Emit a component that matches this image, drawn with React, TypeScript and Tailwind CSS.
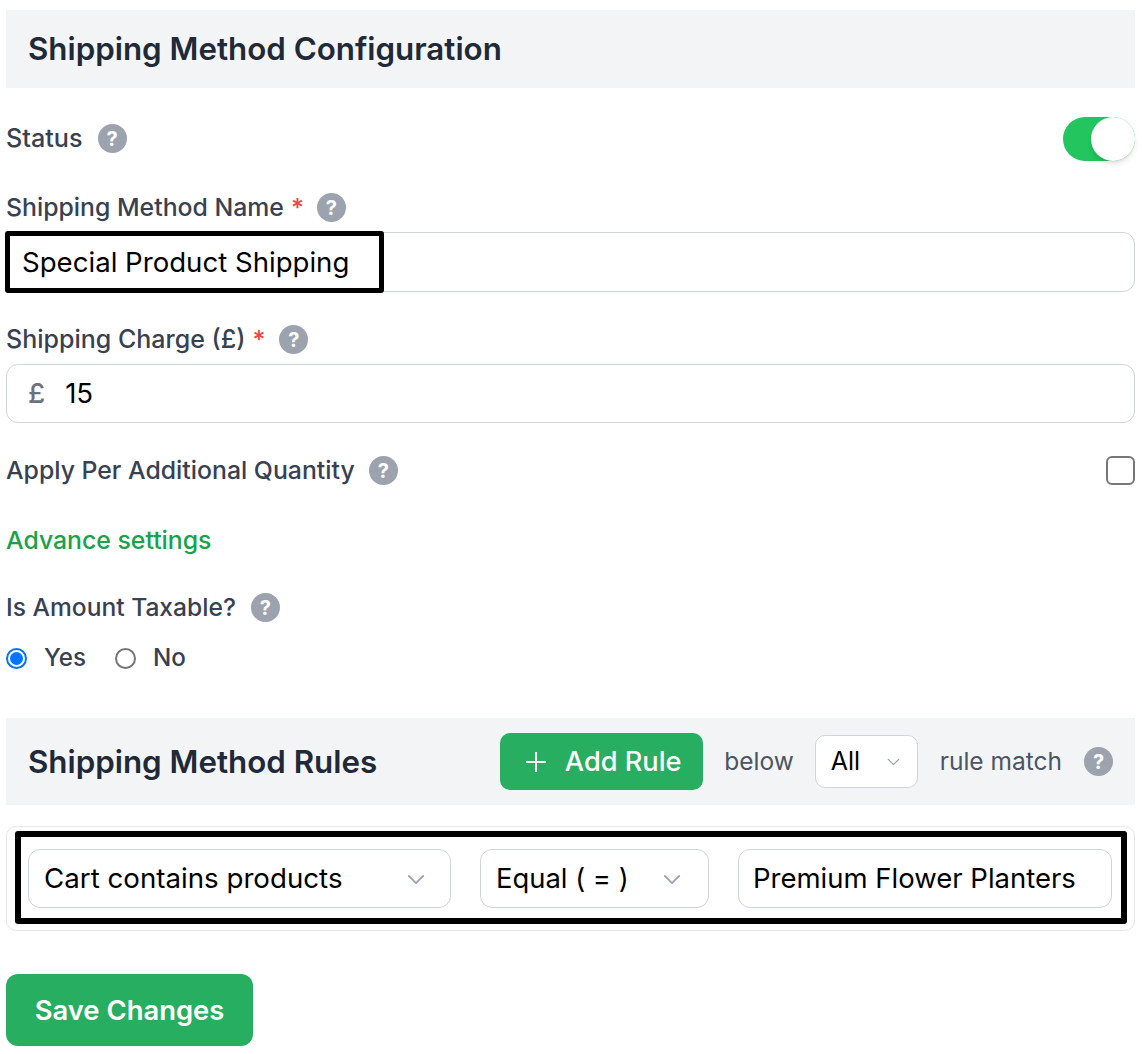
import React from "react";

function Help({ className = "" }: { className?: string }) {
  return (
    <span className={"flex h-[29px] w-[29px] shrink-0 items-center justify-center rounded-full bg-[#9ca3af] text-[20px] font-bold leading-none text-white " + className}>?</span>
  );
}

function Chevron({ className = "" }: { className?: string }) {
  return (
    <svg className={className} viewBox="0 0 20 12" fill="none" stroke="#9ca3af" strokeWidth="2" strokeLinecap="round" strokeLinejoin="round">
      <path d="M2 2l8 8 8-8" />
    </svg>
  );
}

export default function App() {
  return (
    <div className="bg-white px-[6px] pr-[7px] pt-[10px] font-['Inter','Liberation_Sans',sans-serif] text-[#374151] h-[1054px] overflow-hidden">
      <div className="flex h-[78px] items-center bg-[#f3f4f6] px-[22px]">
        <h2 className="text-[31.3px] font-semibold text-[#1f2937]">Shipping Method Configuration</h2>
      </div>

      <div className="mt-[29px] flex h-[44px] items-center justify-between">
        <div className="flex items-center gap-[15px]">
          <span className="text-[25.2px] font-medium">Status</span>
          <Help />
        </div>
        <div className="relative h-[44px] w-[72px] rounded-full bg-[#22c55e]">
          <span className="absolute right-0 top-0 h-[44px] w-[44px] rounded-full bg-white shadow-md" />
        </div>
      </div>

      <div className="mt-[32px] flex h-[29px] items-center">
        <span className="text-[24.8px] font-medium">Shipping Method Name</span>
        <span className="ml-[7px] text-[24.8px] font-medium text-[#ef4444]">*</span>
        <Help className="ml-[13px]" />
      </div>
      <div className="relative mt-[10px] flex h-[60px] items-center rounded-[12px] border border-[#d1d5db] px-[15px] pt-[1px] text-[27.6px] text-black">
        Special Product Shipping
        <div className="absolute left-[-2px] top-[-2px] h-[62px] w-[379px] rounded-[3px] border-[5px] border-black" />
      </div>

      <div className="mt-[33px] flex h-[29px] items-center">
        <span className="text-[25px] font-medium">Shipping Charge (£)</span>
        <span className="ml-[7px] text-[24.8px] font-medium text-[#ef4444]">*</span>
        <Help className="ml-[14px]" />
      </div>
      <div className="mt-[10px] flex h-[59px] items-center rounded-[12px] border border-[#d1d5db] px-[21px] pt-[1px] text-[27.6px] text-black">
        <span className="font-medium text-[#6b7280]">£</span>
        <span className="ml-[20px]">15</span>
      </div>

      <div className="mt-[33px] flex h-[29px] items-center justify-between">
        <div className="flex items-center gap-[14px]">
          <span className="text-[24.8px] font-medium">Apply Per Additional Quantity</span>
          <Help />
        </div>
        <span className="h-[29px] w-[29px] rounded-[6px] border-2 border-[#767676]" />
      </div>

      <div className="mt-[39px] text-[24.8px] font-medium leading-[32px] text-[#16a34a]">Advance settings</div>

      <div className="mt-[37px] flex h-[29px] items-center gap-[15px]">
        <span className="text-[24.6px] font-medium">Is Amount Taxable?</span>
        <Help />
      </div>

      <div className="mt-[20px] flex h-[32px] items-center text-[24.2px] font-medium">
        <span className="flex h-[21px] w-[21px] items-center justify-center rounded-full border-2 border-[#0075ff]">
          <span className="h-[13px] w-[13px] rounded-full bg-[#0075ff]" />
        </span>
        <span className="ml-[17px]">Yes</span>
        <span className="ml-[29px] h-[21px] w-[21px] rounded-full border-2 border-[#767676]" />
        <span className="ml-[17px]">No</span>
      </div>

      <div className="mt-[44px] flex h-[87px] items-center bg-[#f3f4f6] px-[22px]">
        <h2 className="pt-[1px] text-[31.3px] font-semibold text-[#1f2937]">Shipping Method Rules</h2>
        <button className="ml-auto flex h-[57px] w-[203px] items-center justify-center gap-[19px] rounded-[10px] bg-[#27ae60] pl-[4px] pt-[1px] text-[27.2px] font-medium text-white">
          <svg className="h-[20px] w-[20px]" viewBox="0 0 20 20" fill="none" stroke="white" strokeWidth="2"><path d="M10 0v20M0 10h20" /></svg>
          Add Rule
        </button>
        <span className="ml-[21px] text-[24.5px] text-[#4b5563]">below</span>
        <div className="ml-[21px] flex h-[53px] w-[103px] items-center justify-between rounded-[10px] border border-[#d1d5db] bg-white pl-[15px] pr-[17px] text-[25px] text-black">
          All
          <Chevron className="h-[8px] w-[13px]" />
        </div>
        <span className="ml-[22px] text-[24.5px] text-[#4b5563]">rule match</span>
        <Help className="ml-[22px]" />
      </div>

      <div className="relative mt-[21px] flex h-[105px] items-center gap-[29px] rounded-[10px] border border-[#e5e7eb] pl-[21px] pr-[22px]">
        <div className="flex h-[59px] w-[423px] items-center justify-between rounded-[12px] border border-[#d1d5db] pl-[15px] pr-[25px] pt-[1px] text-[27.7px] text-black">
          Cart contains products
          <Chevron className="h-[11px] w-[18px]" />
        </div>
        <div className="flex h-[59px] w-[229px] items-center justify-between rounded-[12px] border border-[#d1d5db] pl-[15px] pr-[27px] pt-[1px] text-[27.4px] text-black">
          Equal ( = )
          <Chevron className="h-[11px] w-[18px]" />
        </div>
        <div className="flex h-[59px] flex-1 items-center rounded-[12px] border border-[#d1d5db] px-[14px] pt-[1px] text-[27.5px] text-black">
          Premium Flower Planters
        </div>
        <div className="absolute bottom-[6px] left-[8px] right-[7px] top-[4px] rounded-[3px] border-[6px] border-black" />
      </div>

      <button className="mt-[43px] flex h-[72px] w-[247px] items-center justify-center rounded-[12px] bg-[#27ae60] pt-[1px] text-[27.4px] font-semibold text-white">
        Save Changes
      </button>
    </div>
  );
}
